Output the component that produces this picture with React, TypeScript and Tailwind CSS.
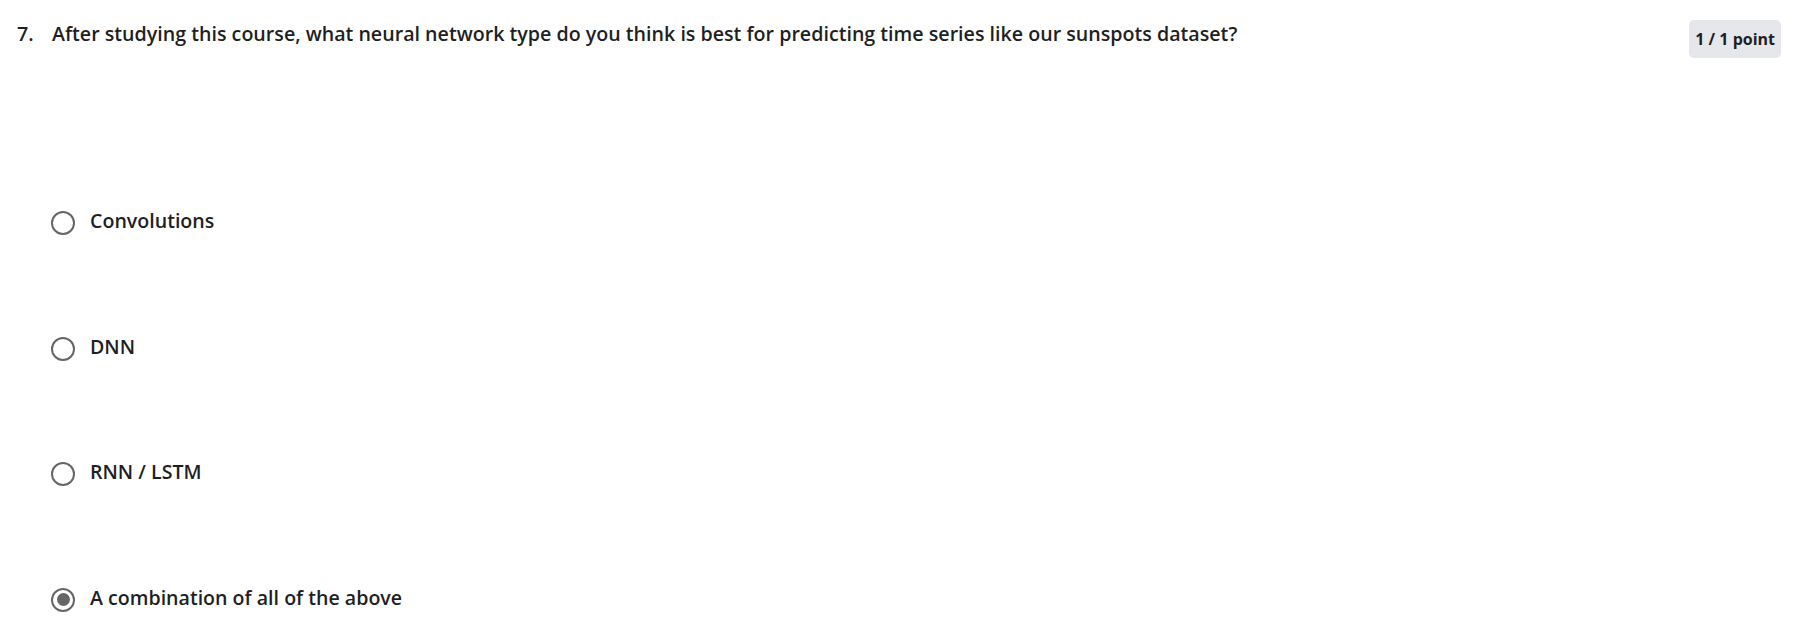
import React from "react";

const options = [
  { label: "Convolutions", selected: false },
  { label: "DNN", selected: false },
  { label: "RNN / LSTM", selected: false },
  { label: "A combination of all of the above", selected: true },
];

export default function App() {
  return (
    <div
      className="w-full h-[643px] bg-white text-[#1f1f1f] overflow-hidden"
      style={{ fontFamily: '"Open Sans", "Noto Sans", sans-serif' }}
    >
      <div className="flex items-start pt-[20px] pl-[17px] pr-[26px]">
        <div className="w-[35px] text-[19.6px] leading-[28px] font-semibold">7.</div>
        <div className="flex-1 text-[19.65px] leading-[28px] font-semibold">
          After studying this course, what neural network type do you think is best for predicting time series like our sunspots dataset?
        </div>
        <div className="h-[38px] px-[6px] flex items-center rounded-[5px] bg-[#e5e7eb] text-[16px] font-bold text-[#1f1f1f]">
          1 / 1 point
        </div>
      </div>
      <div className="mt-[102px] flex flex-col">
        {options.map((o) => (
          <div key={o.label} className="h-[125.7px] flex items-center pl-[51px] gap-[15px]">
            <div className="w-[24px] h-[24px] rounded-full border-2 border-[#666666] flex items-center justify-center">
              {o.selected && <div className="w-[13px] h-[13px] rounded-full bg-[#666666]" />}
            </div>
            <span className="text-[19.6px] leading-[26px] pb-[4px] font-semibold">{o.label}</span>
          </div>
        ))}
      </div>
    </div>
  );
}
